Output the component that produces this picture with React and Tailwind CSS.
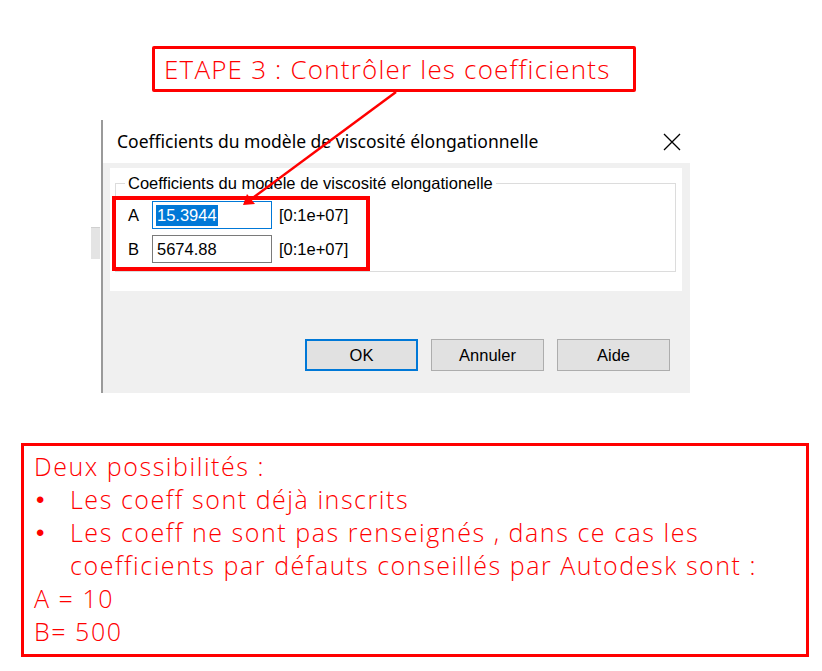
import React from 'react';

const WinButton = ({ label, primary }) => (
  <button
    className={
      'w-[113px] h-[32px] bg-[#e1e1e1] text-[16.5px] text-black ' +
      (primary ? 'border-2 border-[#0078d7]' : 'border border-[#adadad]')
    }
  >
    {label}
  </button>
);

const CoefRow = ({ name, value, selected }) => (
  <div className="flex items-center h-[28px]">
    <span className="w-[24px] text-[16.5px] text-black">{name}</span>
    <div
      className={
        'w-[120px] h-[28px] bg-white flex items-center pl-[3px] text-[16.5px] text-black ' +
        (selected ? 'border border-[#0078d7]' : 'border border-[#7a7a7a]')
      }
    >
      {selected ? (
        <span className="bg-[#0078d7] text-white leading-[21px] px-[1px]">{value}</span>
      ) : (
        <span className="px-[1px]">{value}</span>
      )}
    </div>
    <span className="ml-[7px] text-[16.5px] text-black">[0:1e+07]</span>
  </div>
);

const Bullet = () => (
  <span className="w-[36px] shrink-0 pl-[2px] text-[24px]" style={{ fontFamily: '"Liberation Sans", Arial, sans-serif' }}>
    •
  </span>
);

export default function App() {
  return (
    <div
      className="relative w-[822px] h-[671px] bg-white overflow-hidden"
      style={{ fontFamily: '"Liberation Sans", Arial, sans-serif' }}
    >
      {/* Step label */}
      <div className="pt-[46px] pl-[152px]">
        <div
          className="w-[484px] h-[46px] border-[3px] border-[#ff0000] rounded-[2px] flex items-center pl-[9px] text-[26px] font-light tracking-[1.2px] text-[#ff0000]"
          style={{ fontFamily: '"Open Sans", sans-serif' }}
        >
          ETAPE 3 : Contrôler les coefficients
        </div>
      </div>

      {/* Dialog capture */}
      <div className="mt-[28px] ml-[90px] w-[600px] h-[273px] flex">
        <div className="w-[13px] relative">
          <div className="absolute left-[11px] top-0 bottom-0 w-[2px] bg-[#9a9a9a]"></div>
          <div className="absolute left-[1px] top-[107px] w-[9px] h-[32px] bg-[#e4e4e4] border-t border-[#d0d0d0]"></div>
        </div>
        <div className="flex-1 flex flex-col">
          <div className="h-[43px] bg-white flex items-center justify-between pl-[14px] pr-[10px]">
            <span className="text-[17.5px] text-black" style={{ fontFamily: '"Noto Sans", "Open Sans", sans-serif' }}>
              Coefficients du modèle de viscosité élongationnelle
            </span>
            <svg width="18" height="18" viewBox="0 0 18 18" className="mr-[-1px]">
              <path d="M1 1 L17 17 M17 1 L1 17" stroke="#000" strokeWidth="1.3" fill="none" />
            </svg>
          </div>
          <div className="flex-1 bg-[#f0f0f0] pt-[5px] pl-[7px] pr-[8px]">
            <div className="h-[123px] bg-white pt-[7px] pl-[5px] pr-[6px]">
              <fieldset className="border border-[#dcdcdc] pl-[12px] pb-[8px]">
                <legend className="-ml-[3px] px-[3px] text-[16.5px] leading-[17px] text-black">
                  Coefficients du modèle de viscosité elongationelle
                </legend>
                <div className="mt-[9px] flex flex-col gap-[6px]">
                  <CoefRow name="A" value="15.3944" selected />
                  <CoefRow name="B" value="5674.88" />
                </div>
              </fieldset>
            </div>
            <div className="mt-[48px] flex justify-end gap-[13px] pr-[12px]">
              <WinButton label="OK" primary />
              <WinButton label="Annuler" />
              <WinButton label="Aide" />
            </div>
          </div>
        </div>
      </div>

      {/* Explanation box */}
      <div
        className="mt-[50px] ml-[21px] w-[788px] h-[214px] border-[3px] border-[#ff0000] pt-[4px] pl-[10px] text-[25px] leading-[33px] font-light tracking-[1.55px] text-[#ff0000]"
        style={{ fontFamily: '"Open Sans", sans-serif' }}
      >
        <div>Deux possibilités :</div>
        <div className="flex">
          <Bullet />
          <span>Les coeff sont déjà inscrits</span>
        </div>
        <div className="flex">
          <Bullet />
          <span>
            Les coeff ne sont pas renseignés , dans ce cas les
            <br />
            coefficients par défauts conseillés par Autodesk sont :
          </span>
        </div>
        <div>A = 10</div>
        <div>B= 500</div>
      </div>

      {/* Annotation: red frame around the coefficient rows */}
      <div className="absolute left-[112px] top-[196px] w-[258px] h-[75px] border-4 border-[#ff0000]"></div>

      {/* Annotation arrow */}
      <svg className="absolute left-0 top-0" width="822" height="671" viewBox="0 0 822 671">
        <line x1="396" y1="92" x2="250" y2="200" stroke="#ff0000" strokeWidth="2.5" />
        <path d="M243 205 L247 194 L255 204 Z" fill="#ff0000" />
      </svg>
    </div>
  );
}
